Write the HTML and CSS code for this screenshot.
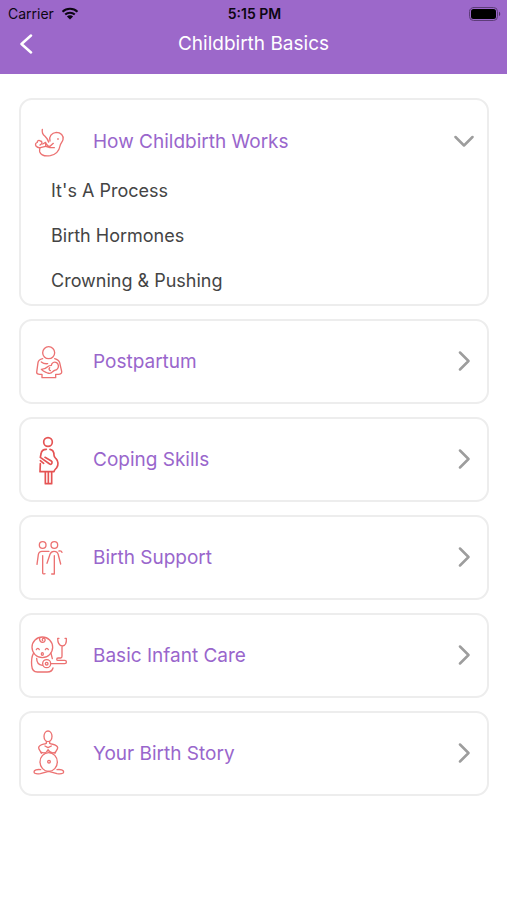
FILE: index.html
```html
<!DOCTYPE html>
<html lang="en">
	<head>
		<meta charset="UTF-8" />
		<meta name="viewport" content="width=device-width, initial-scale=1.0" />
		<title>Childbirth Basics</title>
		<link rel="stylesheet" href="styles.css">
	</head>
	<body>
		<header class="header">
			<!-- Status bar -->
			<div class="status">
				<div class="carrier">
					<span>Carrier</span>
					<svg class="wifi" viewBox="0 0 18 13">
						<path d="M1.5 4.8a10.8 10.8 0 0 1 15 0M4.2 7.6a7 7 0 0 1 9.6 0" />
						<path class="solid" d="M9 12.6L5.9 9.5a4.4 4.4 0 0 1 6.2 0z" />
					</svg>
				</div>
				<span class="clock">5:15 PM</span>
				<svg class="battery" viewBox="0 0 32 14">
					<rect class="shell" x="0.5" y="0.5" width="28" height="13" rx="4" />
					<rect x="2" y="2" width="25" height="10" rx="2.5" />
					<path d="M30 4.8c1.6.6 1.6 3.8 0 4.4z" opacity="0.5" />
				</svg>
			</div>

			<!-- Title bar -->
			<div class="navbar">
				<button class="back" type="button" aria-label="Back">
					<svg viewBox="0 0 14 20"><path d="M12 1.5L2.5 10L12 18.5" /></svg>
				</button>
				<h1>Childbirth Basics</h1>
			</div>
		</header>

		<main class="topics">
			<section class="card open">
				<button class="topic" type="button" aria-expanded="true">
					<svg class="icon" viewBox="42 60 120 156">
						<path d="M82 103c-2 10 2 16 8 21 6 6 9 10 11 17" />
						<path d="M105 138c-4-13 5-25 19-26 13 0 23 10 20 22-2 8-8 11-9 19-3 16-14 26-29 29-14 2-28-1-32-12-1-4 0-8 1-12" />
						<path d="M76 138c-4-4-10-1-9 4-5 1-7 7-4 11 4 5 11 6 16 4l13-3M76 138c4 0 6 4 4 8l-5 4" />
						<path d="M83 147l9-5v12l13 4h13M94 146c2 5 6 8 11 8l10-9M128 132h2" />
					</svg>
					<span class="name">How Childbirth Works</span>
					<svg class="arrow" viewBox="0 0 20 20"><path d="M1.5 6L10 14.500L18.500 6" /></svg>
				</button>
				<ul class="lessons">
					<li><a href="#process">It's A Process</a></li>
					<li><a href="#hormones">Birth Hormones</a></li>
					<li><a href="#pushing">Crowning &amp; Pushing</a></li>
				</ul>
			</section>

			<section class="card">
				<button class="topic" type="button" aria-expanded="false">
					<svg class="icon" viewBox="42 16 120 156">
						<circle cx="101" cy="69" r="18" />
						<path d="M83 87c-8 2-13 5-14 12l-4 29c0 4 4 6 9 6h7v10h41v-10h8c7 0 11-3 10-9l-6-26c-2-7-8-10-15-12" />
						<path d="M79 119c8 0 14-3 19-8 4-4 6-4 11-4 1-8 9-12 16-8 7 5 7 15 1 20-5 3-9 3-13 7-4 5-9 6-15 4-6-3-12-3-19-11" />
						<path d="M79 97c5 4 12 6 19 5M104 114c-3 3-2 7 2 9" />
					</svg>
					<span class="name">Postpartum</span>
					<svg class="arrow" viewBox="0 0 20 20"><path d="M6 1.500L14.500 10L6 18.500" /></svg>
				</button>
			</section>

			<section class="card">
				<button class="topic" type="button" aria-expanded="false">
					<svg class="icon bold" viewBox="42 24 120 156">
						<circle cx="99" cy="51" r="13" />
						<path d="M94 73c-10 0-15 5-16 14l-2 10 28 20c6 3 10-5 5-9L90 97M76 116l-1 24h42c1-6 5-8 8-12 6-8 5-20-2-27-3-3-6-5-6-10 0-10-4-17-12-18M76 107l10 8" />
						<path d="M91 141v35h19v-35M100 142v34" />
					</svg>
					<span class="name">Coping Skills</span>
					<svg class="arrow" viewBox="0 0 20 20"><path d="M6 1.500L14.500 10L6 18.500" /></svg>
				</button>
			</section>

			<section class="card">
				<button class="topic" type="button" aria-expanded="false">
					<svg class="icon" viewBox="42 35 120 156">
						<circle cx="83" cy="77" r="10" />
						<circle cx="118" cy="77" r="10" />
						<path d="M66 135l4-29c1-7 5-10 11-10h21M83 109v52c0 3 4 3 7 2" />
						<path d="M96 132l9-27c2-6 6-9 12-9 7 0 12 4 13 11l7 27M118 109v55h-8M132 95c5-1 8 0 9 4" />
					</svg>
					<span class="name">Birth Support</span>
					<svg class="arrow" viewBox="0 0 20 20"><path d="M6 1.500L14.500 10L6 18.500" /></svg>
				</button>
			</section>

			<section class="card">
				<button class="topic" type="button" aria-expanded="false">
					<svg class="icon" viewBox="42 31 120 156">
						<circle cx="82" cy="86" r="31" />
						<path d="M74 57c-2 9 4 15 10 14 7-1 9-10 3-12-4-1-7 4-4 7M64 93c2-5 7-5 9 0M91 93c2-5 7-5 9 0" />
						<ellipse cx="82" cy="106" rx="3" ry="4" />
						<path d="M55 105c-5 9-6 21-5 35 1 13 6 20 17 20h30c9 0 15-4 17-12M108 104l4 16M65 119c0 11 5 20 17 21" />
						<circle cx="95" cy="135" r="12" />
						<circle cx="95" cy="135" r="4" />
						<path d="M108 135h41c7 0 7-10 0-10h-20c-5 0-5-7 0-7h8c3 0 4-2 4-5V82M132 59h-4c0 12 3 22 14 23 10-1 13-10 12-23h-4" />
					</svg>
					<span class="name">Basic Infant Care</span>
					<svg class="arrow" viewBox="0 0 20 20"><path d="M6 1.500L14.500 10L6 18.500" /></svg>
				</button>
			</section>

			<section class="card">
				<button class="topic" type="button" aria-expanded="false">
					<svg class="icon" viewBox="42 24 120 156">
						<ellipse cx="99" cy="52" rx="12" ry="16" />
						<path d="M94 67v6c-10 4-22 4-23 13 0 6 6 10 8 17M104 67v6c10 4 23 4 24 13 0 6-6 10-8 17" />
						<path d="M79 100c8 3 17 0 20-8 4 8 13 11 22 8M90 81l9 5 10-5" />
						<ellipse cx="101" cy="129" rx="26" ry="28" />
						<circle cx="102" cy="128" r="4" />
						<path d="M77 152c-11-2-20 2-20 7 0 6 10 6 19 5l25-7 25 7c9 1 20 1 20-5 0-5-9-9-20-7" />
					</svg>
					<span class="name">Your Birth Story</span>
					<svg class="arrow" viewBox="0 0 20 20"><path d="M6 1.500L14.500 10L6 18.500" /></svg>
				</button>
			</section>
		</main>
	</body>
</html>
```
FILE: styles.css
```css
* {
	box-sizing: border-box;
}

body {
	margin: 0;
	background: #ffffff;
	font-family: Inter, "Liberation Sans", sans-serif;
}

svg {
	display: block;
	flex: none;
	fill: none;
	stroke-linecap: round;
	stroke-linejoin: round;
}

.header {
	background: #9c68ca;
	color: #ffffff;
	padding-bottom: 14px;
}

.status {
	display: grid;
	grid-template-columns: 1fr auto 1fr;
	align-items: center;
	height: 27px;
	padding: 0 6px 0 8px;
	color: #0c0612;
	font-size: 14px;
}

.carrier {
	display: flex;
	align-items: center;
	gap: 7px;
}

.wifi {
	width: 18px;
	height: 13px;
	stroke: #0c0612;
	stroke-width: 2;
	stroke-linecap: butt;
}

.wifi .solid {
	fill: #0c0612;
	stroke: none;
}

.clock {
	font-weight: 600;
}

.battery {
	width: 32px;
	height: 14px;
	fill: #000000;
	justify-self: end;
}

.battery .shell {
	fill: none;
	stroke: #5d3d79;
}

.navbar {
	display: grid;
	grid-template-columns: 40px 1fr 40px;
	align-items: center;
	height: 33px;
	padding: 0 6px;
}

.navbar h1 {
	margin: 0;
	font-size: 19px;
	font-weight: 400;
	text-align: center;
}

.back {
	display: flex;
	justify-content: center;
	padding: 6px 0;
	border: 0;
	background: none;
	cursor: pointer;
}

.back svg {
	width: 14px;
	height: 20px;
	stroke: #ffffff;
	stroke-width: 2.5;
}

.topics {
	display: flex;
	flex-direction: column;
	gap: 13px;
	padding: 24px 18px 24px 19px;
}

.card {
	border: 2px solid #ededed;
	border-radius: 13px;
}

.topic {
	display: flex;
	align-items: center;
	width: 100%;
	padding: 14px 13px 15px 8px;
	border: 0;
	background: none;
	color: #9966cc;
	font-family: inherit;
	font-size: 19px;
	text-align: left;
	cursor: pointer;
}

.open .topic {
	padding: 15px 13px 12px 8px;
}

.icon {
	width: 40px;
	height: 52px;
	stroke: #ec7272;
	stroke-width: 4;
}

.icon.bold {
	stroke: #e55353;
	stroke-width: 5;
}

.name {
	flex: 1;
	margin-left: 24px;
}

.arrow {
	width: 20px;
	height: 20px;
	stroke: #9d9d9d;
	stroke-width: 2.5;
}

.lessons {
	display: flex;
	flex-direction: column;
	gap: 21px;
	margin: 0;
	padding: 0 30px 11px;
	list-style: none;
}

.lessons a {
	color: #444444;
	font-size: 18px;
	line-height: 24px;
	text-decoration: none;
}

.lessons li {
	display: flex;
}
```
